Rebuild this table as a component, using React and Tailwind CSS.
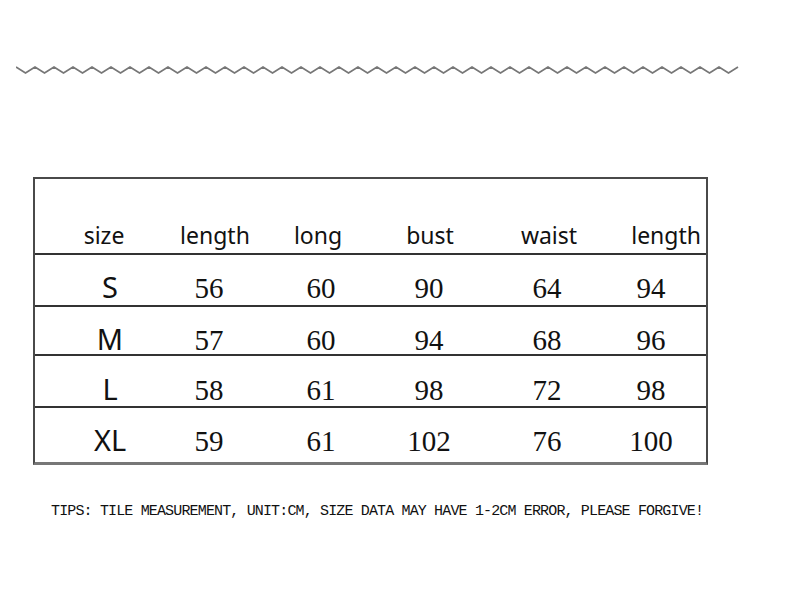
import React from 'react';

const header = ['size', 'length', 'long', 'bust', 'waist', 'length'];

const rows = [
    { size: 'S', values: ['56', '60', '90', '64', '94'], h: 'h-[52px]', pt: 'pt-[17px]' },
    { size: 'M', values: ['57', '60', '94', '68', '96'], h: 'h-[49px]', pt: 'pt-[17px]' },
    { size: 'L', values: ['58', '61', '98', '72', '98'], h: 'h-[52px]', pt: 'pt-[18px]' },
    { size: 'XL', values: ['59', '61', '102', '76', '100'], h: 'h-[54px]', pt: 'pt-[17px]' },
];

// zigzag line, peak/trough every 9.5px
const Zigzag = () => {
    const pts = [];
    for (let i = 0; i <= 76; i++) {
        pts.push(`${(i * 9.5).toFixed(1)},${i % 2 === 0 ? 1 : 7}`);
    }
    return (
        <svg width="724" height="8" viewBox="0 0 724 8" className="block">
            <polyline points={pts.join(' ')} fill="none" stroke="#777" strokeWidth="1.7" />
        </svg>
    );
};

const App = () => {
    return (
        <div className="w-[790px] h-[612px] bg-white relative overflow-hidden">
            <div className="pt-[66px] pl-[16px]">
                <Zigzag />
            </div>

            {/* 사이즈 표 */}
            <div className="mt-[103px] ml-[33px] w-[675px] border-2 border-b-[3px] border-[#4a4a4a] border-b-[#777]">
                <div
                    className="grid grid-cols-[138px_84px_122px_102px_136px_1fr] h-[76px] items-end pb-[6px] border-b-2 border-[#333] text-[#111] text-[23px] leading-none"
                    style={{ fontFamily: '"Noto Sans", "Open Sans", sans-serif' }}
                >
                    {header.map((h, i) => (
                        <div
                            key={i}
                            className={`flex whitespace-nowrap ${i === 5 ? 'justify-end pr-[5px]' : 'justify-center'}`}
                        >
                            {h}
                        </div>
                    ))}
                </div>

                {rows.map((r, idx) => (
                    <div
                        key={r.size}
                        className={`grid grid-cols-[150px_48px_176px_40px_196px_12px] ${r.h} ${r.pt} text-[#111] leading-none ${
                            idx < rows.length - 1 ? 'border-b-2 border-[#333]' : ''
                        }`}
                    >
                        <div
                            className="flex justify-center text-[29px] whitespace-nowrap"
                            style={{ fontFamily: '"Noto Sans", "Open Sans", sans-serif' }}
                        >
                            {r.size}
                        </div>
                        {r.values.map((v, i) => (
                            <div
                                key={i}
                                className="flex justify-center text-[29px] whitespace-nowrap pt-[2px]"
                                style={{ fontFamily: '"Liberation Serif", serif' }}
                            >
                                {v}
                            </div>
                        ))}
                    </div>
                ))}
            </div>

            <div
                className="mt-[39px] ml-[51px] text-[15px] tracking-[-0.85px] leading-none text-[#111] whitespace-nowrap"
                style={{ fontFamily: '"Liberation Mono", monospace' }}
            >
                TIPS: TILE MEASUREMENT, UNIT:CM, SIZE DATA MAY HAVE 1-2CM ERROR, PLEASE FORGIVE!
            </div>
        </div>
    );
};

export default App;
